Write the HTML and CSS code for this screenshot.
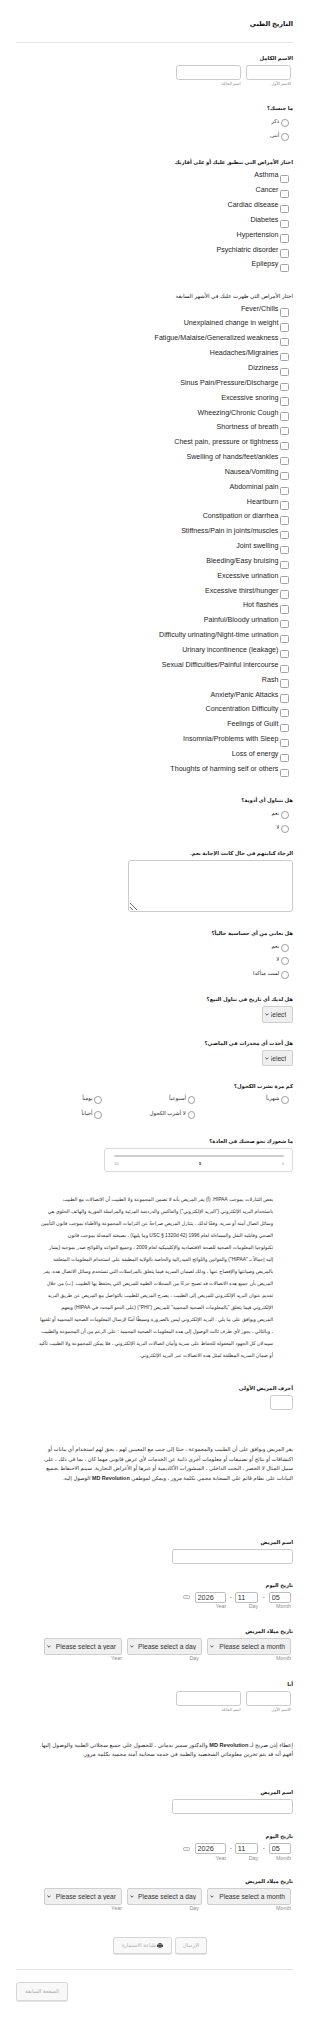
FILE: index.html
```html
<!DOCTYPE html>
<html lang="ar" dir="rtl">

<head>
    <meta charset="UTF-8">
    <meta name="viewport" content="width=device-width, initial-scale=1.0">
    <title>التاريخ الطبي</title>
    <link rel="stylesheet" href="styles.css">
</head>

<body>
    <form class="form">
        <h1 class="form-title">التاريخ الطبي</h1>

        <div class="field q-fullname">
            <label class="field-label">الاسم الكامل</label>
            <div class="name-row">
                <div class="name-part">
                    <input type="text" class="input name-first">
                    <span class="sublabel">الاسم الأول</span>
                </div>
                <div class="name-part">
                    <input type="text" class="input name-last">
                    <span class="sublabel">اسم العائلة</span>
                </div>
            </div>
        </div>

        <div class="field q-gender">
            <label class="field-label">ما جنسك؟</label>
            <ul class="options">
                <li class="option"><input type="radio" name="gender"><span>ذكر</span></li>
                <li class="option"><input type="radio" name="gender"><span>أنثى</span></li>
            </ul>
        </div>

        <div class="field q-family">
            <label class="field-label">اختار الأمراض التي تنطبق عليك أو على أقاربك</label>
            <ul class="checks">
                <li class="check"><input type="checkbox"><span>Asthma</span></li>
                <li class="check"><input type="checkbox"><span>Cancer</span></li>
                <li class="check"><input type="checkbox"><span>Cardiac disease</span></li>
                <li class="check"><input type="checkbox"><span>Diabetes</span></li>
                <li class="check"><input type="checkbox"><span>Hypertension</span></li>
                <li class="check"><input type="checkbox"><span>Psychiatric disorder</span></li>
                <li class="check"><input type="checkbox"><span>Epilepsy</span></li>
            </ul>
        </div>

        <div class="field q-symptoms">
            <label class="field-label label-light">اختار الأمراض التي ظهرت عليك في الأشهر السابقة</label>
            <ul class="checks">
                <li class="check"><input type="checkbox"><span>Fever/Chills</span></li>
                <li class="check"><input type="checkbox"><span>Unexplained change in weight</span></li>
                <li class="check"><input type="checkbox"><span>Fatigue/Malaise/Generalized weakness</span></li>
                <li class="check"><input type="checkbox"><span>Headaches/Migraines</span></li>
                <li class="check"><input type="checkbox"><span>Dizziness</span></li>
                <li class="check"><input type="checkbox"><span>Sinus Pain/Pressure/Discharge</span></li>
                <li class="check"><input type="checkbox"><span>Excessive snoring</span></li>
                <li class="check"><input type="checkbox"><span>Wheezing/Chronic Cough</span></li>
                <li class="check"><input type="checkbox"><span>Shortness of breath</span></li>
                <li class="check"><input type="checkbox"><span>Chest pain, pressure or tightness</span></li>
                <li class="check"><input type="checkbox"><span>Swelling of hands/feet/ankles</span></li>
                <li class="check"><input type="checkbox"><span>Nausea/Vomiting</span></li>
                <li class="check"><input type="checkbox"><span>Abdominal pain</span></li>
                <li class="check"><input type="checkbox"><span>Heartburn</span></li>
                <li class="check"><input type="checkbox"><span>Constipation or diarrhea</span></li>
                <li class="check"><input type="checkbox"><span>Stiffness/Pain in joints/muscles</span></li>
                <li class="check"><input type="checkbox"><span>Joint swelling</span></li>
                <li class="check"><input type="checkbox"><span>Bleeding/Easy bruising</span></li>
                <li class="check"><input type="checkbox"><span>Excessive urination</span></li>
                <li class="check"><input type="checkbox"><span>Excessive thirst/hunger</span></li>
                <li class="check"><input type="checkbox"><span>Hot flashes</span></li>
                <li class="check"><input type="checkbox"><span>Painful/Bloody urination</span></li>
                <li class="check"><input type="checkbox"><span>Difficulty urinating/Night-time urination</span></li>
                <li class="check"><input type="checkbox"><span>Urinary incontinence (leakage)</span></li>
                <li class="check"><input type="checkbox"><span>Sexual Difficulties/Painful intercourse</span></li>
                <li class="check"><input type="checkbox"><span>Rash</span></li>
                <li class="check"><input type="checkbox"><span>Anxiety/Panic Attacks</span></li>
                <li class="check"><input type="checkbox"><span>Concentration Difficulty</span></li>
                <li class="check"><input type="checkbox"><span>Feelings of Guilt</span></li>
                <li class="check"><input type="checkbox"><span>Insomnia/Problems with Sleep</span></li>
                <li class="check"><input type="checkbox"><span>Loss of energy</span></li>
                <li class="check"><input type="checkbox"><span>Thoughts of harming self or others</span></li>
            </ul>
        </div>

        <div class="field q-meds">
            <label class="field-label">هل تتناول أي أدوية؟</label>
            <ul class="options">
                <li class="option"><input type="radio" name="meds"><span>نعم</span></li>
                <li class="option"><input type="radio" name="meds"><span>لا</span></li>
            </ul>
        </div>

        <div class="field q-meds-list">
            <label class="field-label">الرجاء كتابتهم في حال كانت الإجابة نعم.</label>
            <textarea class="textarea"></textarea>
        </div>

        <div class="field q-allergy">
            <label class="field-label">هل تعاني من أي حساسية حالياً؟</label>
            <ul class="options">
                <li class="option"><input type="radio" name="allergy"><span>نعم</span></li>
                <li class="option"><input type="radio" name="allergy"><span>لا</span></li>
                <li class="option"><input type="radio" name="allergy"><span>لست متأكدا</span></li>
            </ul>
        </div>

        <div class="field q-tobacco">
            <label class="field-label">هل لديك أي تاريخ في تناول التبغ؟</label>
            <div class="select-wrap select-narrow">
                <select class="select"><option>Select</option></select>
                <svg class="chevron" width="4" height="3" viewBox="0 0 4 3"><path d="M0.4 0.6 L2 2.2 L3.6 0.6" fill="none" stroke="#444" stroke-width="0.9"/></svg>
            </div>
        </div>

        <div class="field q-drugs">
            <label class="field-label">هل أخذت أي مخدرات في الماضي؟</label>
            <div class="select-wrap select-narrow">
                <select class="select"><option>Select</option></select>
                <svg class="chevron" width="4" height="3" viewBox="0 0 4 3"><path d="M0.4 0.6 L2 2.2 L3.6 0.6" fill="none" stroke="#444" stroke-width="0.9"/></svg>
            </div>
        </div>

        <div class="field q-alcohol">
            <label class="field-label">كم مرة تشرب الكحول؟</label>
            <ul class="options options-grid">
                <li class="option"><input type="radio" name="alcohol"><span>شهرياً</span></li>
                <li class="option"><input type="radio" name="alcohol"><span>أسبوعياً</span></li>
                <li class="option"><input type="radio" name="alcohol"><span>يومياً</span></li>
                <li class="option"></li>
                <li class="option"><input type="radio" name="alcohol"><span>لا أشرب الكحول</span></li>
                <li class="option"><input type="radio" name="alcohol"><span>أحياناً</span></li>
            </ul>
        </div>

        <div class="field q-health">
            <label class="field-label">ما شعورك نحو صحتك في العادة؟</label>
            <div class="slider">
                <div class="slider-track"></div>
                <div class="slider-scale">
                    <span>0</span>
                    <span class="slider-value">5</span>
                    <span>10</span>
                </div>
            </div>
        </div>

        <p class="terms terms-inset q-terms">بعض التنازلات بموجب HIPAA. (أ) يقر المريض بأنه لا تضمن المجموعة ولا الطبيب أن الاتصالات مع الطبيب<br>
            باستخدام البريد الإلكتروني ("البريد الإلكتروني") والفاكس والدردشة المرئية والمراسلة الفورية والهاتف الخلوي هي<br>
            وسائل اتصال آمنة أو سرية. وفقًا لذلك ، يتنازل المريض صراحةً عن التزامات المجموعة والأطباء بموجب قانون التأمين<br>
            الصحي وقابلية النقل والمساءلة لعام 1996 (42 USC § 1320d وما يليها) ، بصيغته المعدلة بموجب قانون<br>
            تكنولوجيا المعلومات الصحية للصحة الاقتصادية والإكلينيكية لعام 2009 ، وجميع القواعد واللوائح صدر بموجبه (يشار<br>
            إليه إجمالاً بـ "HIPAA") والقوانين واللوائح الفيدرالية والخاصة بالولاية المطبقة على استخدام المعلومات المتعلقة<br>
            بالمريض وصيانتها والإفصاح عنها ، وذلك لضمان السرية فيما يتعلق بالمراسلات التي تستخدم وسائل الاتصال هذه. يقر<br>
            المريض بأن جميع هذه الاتصالات قد تصبح جزءًا من السجلات الطبية للمريض التي يحتفظ بها الطبيب. (ب) من خلال<br>
            تقديم عنوان البريد الإلكتروني للمريض إلى الطبيب ، يصرح المريض للطبيب بالتواصل مع المريض عن طريق البريد<br>
            الإلكتروني فيما يتعلق "بالمعلومات الصحية المحمية" للمريض ("PHI") (على النحو المحدد في HIPAA) ويفهم<br>
            المريض ويوافق على ما يلي : البريد الإلكتروني ليس بالضرورة وسيطًا آمنًا لإرسال المعلومات الصحية المحمية أو تلقيها<br>
            ، وبالتالي ، يجوز لأي طرف ثالث الوصول إلى هذه المعلومات الصحية المحمية ؛ على الرغم من أن المجموعة والطبيب<br>
            سيبذلان كل الجهود المعقولة للحفاظ على سرية وأمان اتصالات البريد الإلكتروني ، فلا يمكن للمجموعة ولا الطبيب تأكيد<br>
            أو ضمان السرية المطلقة لمثل هذه الاتصالات عبر البريد الإلكتروني.</p>

        <div class="field q-initials">
            <label class="field-label">أحرف المريض الأولى</label>
            <input type="text" class="input input-initials">
        </div>

        <p class="terms terms-mid q-consent">يقر المريض ويوافق على أن الطبيب والمجموعة ، جنبًا إلى جنب مع المعينين لهم ، يحق لهم استخدام أي بيانات أو<br>
            اكتشافات أو نتائج أو تصنيفات أو معلومات أخرى ذاتية عن الخدمات لأي غرض قانوني مهما كان ، بما في ذلك ، على<br>
            سبيل المثال لا الحصر ، البحث الداخلي ، المنشورات الأكاديمية أو غيرها أو الأغراض التجارية. سيتم الاحتفاظ بجميع<br>
            البيانات على نظام قائم على السحابة محمي بكلمة مرور ، ويمكن لموظفي <b>MD Revolution</b> الوصول إليه.</p>

        <div class="field q-patient">
            <label class="field-label">اسم المريض</label>
            <input type="text" class="input input-wide">
        </div>

        <div class="field q-today">
            <label class="field-label">تاريخ اليوم</label>
            <div class="date-row">
                <div class="date-part">
                    <input type="text" class="date-box date-month" value="05">
                    <span class="sublabel sublabel-en">Month</span>
                </div>
                <span class="date-sep">-</span>
                <div class="date-part">
                    <input type="text" class="date-box date-day" value="11">
                    <span class="sublabel sublabel-en">Day</span>
                </div>
                <span class="date-sep date-sep-short">-</span>
                <div class="date-part">
                    <input type="text" class="date-box date-year" value="2026">
                    <span class="sublabel sublabel-en">Year</span>
                </div>
                <svg class="calendar" width="7" height="4" viewBox="0 0 7 4"><rect x="0.5" y="0.5" width="6" height="3" rx="1" fill="#f2f2f2" stroke="#a8a8a8" stroke-width="0.8"/></svg>
            </div>
        </div>

        <div class="field q-birth">
            <label class="field-label">تاريخ ميلاد المريض</label>
            <div class="select-row">
                <div class="select-part">
                    <div class="select-wrap select-month">
                        <select class="select"><option>Please select a month</option></select>
                        <svg class="chevron" width="4" height="3" viewBox="0 0 4 3"><path d="M0.4 0.6 L2 2.2 L3.6 0.6" fill="none" stroke="#444" stroke-width="0.9"/></svg>
                    </div>
                    <span class="sublabel sublabel-en">Month</span>
                </div>
                <div class="select-part">
                    <div class="select-wrap select-day">
                        <select class="select"><option>Please select a day</option></select>
                        <svg class="chevron" width="4" height="3" viewBox="0 0 4 3"><path d="M0.4 0.6 L2 2.2 L3.6 0.6" fill="none" stroke="#444" stroke-width="0.9"/></svg>
                    </div>
                    <span class="sublabel sublabel-en sublabel-inset">Day</span>
                </div>
                <div class="select-part">
                    <div class="select-wrap select-year">
                        <select class="select"><option>Please select a year</option></select>
                        <svg class="chevron" width="4" height="3" viewBox="0 0 4 3"><path d="M0.4 0.6 L2 2.2 L3.6 0.6" fill="none" stroke="#444" stroke-width="0.9"/></svg>
                    </div>
                    <span class="sublabel sublabel-en">Year</span>
                </div>
            </div>
        </div>

        <div class="field q-me">
            <label class="field-label">أنا</label>
            <div class="name-row">
                <div class="name-part">
                    <input type="text" class="input name-first">
                    <span class="sublabel">الاسم الأول</span>
                </div>
                <div class="name-part">
                    <input type="text" class="input name-last">
                    <span class="sublabel">اسم العائلة</span>
                </div>
            </div>
        </div>

        <p class="terms terms-large q-release">إعطاء إذن صريح لـ <b>MD Revolution</b> والدكتور سمير بدماني ، للحصول على جميع سجلاتي الطبية والوصول إليها.<br>
            أفهم أنه قد يتم تخزين معلوماتي الشخصية والطبية في خدمة سحابية آمنة محمية بكلمة مرور.</p>

        <div class="field q-patient2">
            <label class="field-label">اسم المريض</label>
            <input type="text" class="input input-wide">
        </div>

        <div class="field q-today2">
            <label class="field-label">تاريخ اليوم</label>
            <div class="date-row">
                <div class="date-part">
                    <input type="text" class="date-box date-month" value="05">
                    <span class="sublabel sublabel-en">Month</span>
                </div>
                <span class="date-sep">-</span>
                <div class="date-part">
                    <input type="text" class="date-box date-day" value="11">
                    <span class="sublabel sublabel-en">Day</span>
                </div>
                <span class="date-sep date-sep-short">-</span>
                <div class="date-part">
                    <input type="text" class="date-box date-year" value="2026">
                    <span class="sublabel sublabel-en">Year</span>
                </div>
                <svg class="calendar" width="7" height="4" viewBox="0 0 7 4"><rect x="0.5" y="0.5" width="6" height="3" rx="1" fill="#f2f2f2" stroke="#a8a8a8" stroke-width="0.8"/></svg>
            </div>
        </div>

        <div class="field q-birth2">
            <label class="field-label">تاريخ ميلاد المريض</label>
            <div class="select-row">
                <div class="select-part">
                    <div class="select-wrap select-month">
                        <select class="select"><option>Please select a month</option></select>
                        <svg class="chevron" width="4" height="3" viewBox="0 0 4 3"><path d="M0.4 0.6 L2 2.2 L3.6 0.6" fill="none" stroke="#444" stroke-width="0.9"/></svg>
                    </div>
                    <span class="sublabel sublabel-en">Month</span>
                </div>
                <div class="select-part">
                    <div class="select-wrap select-day">
                        <select class="select"><option>Please select a day</option></select>
                        <svg class="chevron" width="4" height="3" viewBox="0 0 4 3"><path d="M0.4 0.6 L2 2.2 L3.6 0.6" fill="none" stroke="#444" stroke-width="0.9"/></svg>
                    </div>
                    <span class="sublabel sublabel-en sublabel-inset">Day</span>
                </div>
                <div class="select-part">
                    <div class="select-wrap select-year">
                        <select class="select"><option>Please select a year</option></select>
                        <svg class="chevron" width="4" height="3" viewBox="0 0 4 3"><path d="M0.4 0.6 L2 2.2 L3.6 0.6" fill="none" stroke="#444" stroke-width="0.9"/></svg>
                    </div>
                    <span class="sublabel sublabel-en">Year</span>
                </div>
            </div>
        </div>

        <div class="actions">
            <button type="button" class="btn btn-submit" disabled>الإرسال</button>
            <button type="button" class="btn btn-print" disabled>
                <svg class="printer" width="6" height="5" viewBox="0 0 6 5"><rect x="1.5" y="0" width="3" height="1.5" fill="#555"/><rect x="0" y="1.5" width="6" height="2.4" rx="0.5" fill="#444"/><rect x="1.5" y="3.2" width="3" height="1.8" fill="#777"/></svg>
                <span>طباعة الاستمارة</span>
            </button>
        </div>

        <div class="pager">
            <button type="button" class="btn btn-back">الصفحة السابقة</button>
        </div>
    </form>
</body>

</html>
```

FILE: styles.css
```css
* {
    box-sizing: border-box;
}

body {
    margin: 0;
    font-family: "Liberation Sans", "DejaVu Sans", sans-serif;
    color: #2b2b2b;
    background-color: #fff;
}

.form {
    direction: rtl;
    padding: 18px 17px 11px 16px;
}

.form-title {
    margin: 0;
    font-size: 6.6px;
    line-height: 12px;
    font-weight: bold;
    color: #111;
    padding-bottom: 12px;
    border-bottom: 1px solid #e6e6e6;
}

/* vertical rhythm, one per question */
.q-fullname { margin-top: 11px; }
.q-gender { margin-top: 17px; }
.q-family { margin-top: 16.3px; }
.q-symptoms { margin-top: 19.4px; }
.q-meds { margin-top: 19.5px; }
.q-meds-list { margin-top: 15.2px; }
.q-allergy { margin-top: 16.3px; }
.q-tobacco { margin-top: 15px; }
.q-drugs { margin-top: 16px; }
.q-alcohol { margin-top: 15.3px; }
.q-health { margin-top: 15.5px; }
.q-terms { margin-top: 22.3px; }
.q-initials { margin-top: 21.7px; }
.q-consent { margin-top: 35.5px; }
.q-patient { margin-top: 55px; }
.q-today { margin-top: 16.4px; }
.q-birth { margin-top: 18.1px; }
.q-me { margin-top: 19.3px; }
.q-release { margin-top: 27.5px; }
.q-patient2 { margin-top: 28.8px; }
.q-today2 { margin-top: 18.7px; }
.q-birth2 { margin-top: 16.2px; }

.field-label {
    display: block;
    font-size: 5.3px;
    line-height: 8px;
    font-weight: bold;
    color: #1c1c1c;
    margin-bottom: 3px;
}

.label-light {
    font-weight: normal;
    font-size: 5.6px;
    color: #222;
}

.input {
    display: block;
    height: 15px;
    border: 1px solid #cbcbcb;
    border-radius: 2.5px;
    padding: 0 2px;
    font: inherit;
    font-size: 6px;
    background-color: #fff;
}

.name-row {
    display: flex;
    gap: 5px;
    padding-right: 2px;
    margin-top: 1px;
}

.name-part {
    display: flex;
    flex-direction: column;
}

.name-first {
    width: 45.3px;
}

.name-last {
    width: 64.7px;
}

.input-initials {
    width: 23px;
    margin-top: 1px;
}

.input-wide {
    width: 121px;
    margin-top: 1px;
}

.sublabel {
    font-size: 4.2px;
    line-height: 6px;
    color: #8d8d8d;
    margin-top: 1px;
}

.sublabel-en {
    font-size: 5.4px;
    line-height: 5px;
    margin-top: 1.5px;
}

.sublabel-inset {
    padding-right: 3px;
}

/* radios */
.options {
    list-style: none;
    margin: 0.5px 0 0;
    padding: 0 4.3px 0 0;
}

.option {
    display: flex;
    align-items: flex-start;
    gap: 1.7px;
    height: 13.5px;
    font-size: 5.4px;
    line-height: 13.5px;
    color: #2b2b2b;
    white-space: nowrap;
}

.option input {
    appearance: none;
    flex: none;
    width: 7.8px;
    height: 7.8px;
    margin: 4.4px 0 0;
    border: 1px solid #9c9c9c;
    border-radius: 50%;
    background-color: #fff;
}

.options-grid {
    display: grid;
    grid-template-columns: repeat(3, 93.3px);
    margin-top: -2px;
}

.options-grid .option {
    height: 15.3px;
    line-height: 15.3px;
}

.options-grid .option input {
    margin-top: 5.2px;
}

/* checkboxes */
.checks {
    list-style: none;
    margin: -1px 0 0;
    padding: 0 4.3px 0 0;
}

.check {
    display: flex;
    align-items: flex-start;
    gap: 2px;
    height: 14.85px;
    font-size: 7.1px;
    line-height: 14.85px;
    color: #262626;
    white-space: nowrap;
}

.check span {
    direction: ltr;
}

.check input {
    appearance: none;
    flex: none;
    width: 8.3px;
    height: 8.3px;
    margin: 6.8px 0 0;
    border: 1px solid #a3a3a3;
    border-radius: 1.5px;
    background-color: #fff;
}

.textarea {
    display: block;
    width: 165px;
    height: 52px;
    margin-top: 3px;
    border: 1px solid #cbcbcb;
    border-radius: 3px;
    resize: vertical;
    font: inherit;
}

/* selects */
.select-wrap {
    position: relative;
    height: 16.7px;
}

.select {
    appearance: none;
    display: block;
    width: 100%;
    height: 100%;
    margin: 0;
    padding: 0 5px 0 8px;
    border: 1px solid #cfcfcf;
    border-radius: 2px;
    background-color: #efefef;
    font-family: "Liberation Sans", sans-serif;
    font-size: 6.7px;
    color: #333;
    direction: rtl;
}

.chevron {
    position: absolute;
    left: 3px;
    top: 7px;
}

.select-narrow {
    width: 31px;
    margin-top: 2px;
}

.select-narrow .select {
    padding-right: 5.7px;
}

.select-row {
    display: flex;
    gap: 5px;
    padding-right: 2px;
    margin-top: 1.7px;
}

.select-part {
    display: flex;
    flex-direction: column;
}

.select-month { width: 84px; }
.select-day { width: 75px; }
.select-year { width: 78px; }

.select-part .sublabel {
    margin-top: 1px;
}

/* date */
.date-row {
    display: flex;
    align-items: flex-start;
    padding-right: 2px;
    margin-top: 1.6px;
}

.date-part {
    display: flex;
    flex-direction: column;
}

.date-box {
    display: block;
    height: 11px;
    margin: 0;
    padding: 0 0 0 1.5px;
    border: 1px solid #bdbdbd;
    border-radius: 2px;
    font-family: "Liberation Sans", sans-serif;
    font-size: 7.3px;
    color: #333;
    direction: ltr;
    text-align: left;
}

.date-month { width: 21.7px; }
.date-day { width: 23px; }
.date-year { width: 31.3px; }

.date-sep {
    width: 11px;
    font-size: 6px;
    line-height: 11px;
    text-align: center;
    color: #444;
}

.date-sep-short {
    width: 9px;
}

.calendar {
    margin: 3.5px 5px 0 0;
}

/* slider */
.slider {
    width: 189px;
    height: 24px;
    margin-top: 2.4px;
    padding: 6.3px 8px 0 9px;
    border: 1px solid #dadada;
    border-radius: 3px;
}

.slider-track {
    height: 2px;
    border-radius: 1px;
    background-color: #cfcfcf;
}

.slider-scale {
    display: flex;
    justify-content: space-between;
    margin-top: 4px;
    font-size: 4px;
    line-height: 6px;
    color: #999;
}

.slider-value {
    color: #222;
    font-weight: bold;
}

/* paragraphs */
.terms {
    margin-bottom: 0;
    font-size: 5.4px;
    line-height: 9.5px;
    color: #2b2b2b;
}

.terms-inset {
    font-size: 4.9px;
    line-height: 12px;
    padding-right: 20px;
}

.terms-large {
    font-size: 5.6px;
    line-height: 9px;
}

/* buttons */
.actions {
    display: flex;
    justify-content: center;
    gap: 3px;
    margin-top: 25.9px;
    padding: 0 0 15.7px 11px;
    border-bottom: 1px solid #e6e6e6;
}

.btn {
    display: flex;
    align-items: center;
    justify-content: center;
    gap: 1px;
    height: 17px;
    padding: 0;
    border: 1px solid #d6d6d6;
    border-radius: 2.5px;
    background-color: #f8f8f8;
    font: inherit;
    font-size: 5.2px;
    color: #b0b0b0;
    box-shadow: 0 1px 0 #e4e4e4;
}

.btn-submit {
    width: 32px;
}

.btn-print {
    width: 59px;
}

.pager {
    display: flex;
    justify-content: flex-end;
}

.btn-back {
    width: 52px;
    height: 19px;
    margin-top: 11.7px;
    color: #a8a8a8;
}
```
